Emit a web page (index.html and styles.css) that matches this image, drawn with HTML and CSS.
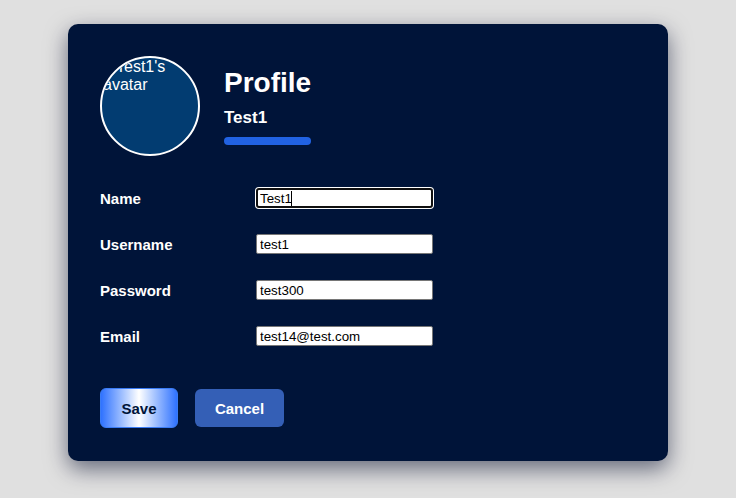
FILE: index.html
```html
<!DOCTYPE html>
<html lang="en">
<head>
<meta charset="utf-8">
<title>Profile</title>
<link rel="stylesheet" href="styles.css">
</head>
<body>
<div class="card">
  <div class="header">
    <div class="avatar"><span class="alt"><span class="broken"></span>Test1's avatar</span></div>
    <div class="titles">
      <h1 class="title">Profile</h1>
      <div class="subtitle">Test1</div>
      <div class="bar"></div>
    </div>
  </div>
  <div class="form">
    <label class="label">Name</label>
    <div class="field focused"><input class="input" type="text" value="Test1"><span class="caret"></span></div>
    <label class="label">Username</label>
    <div class="field"><input class="input" type="text" value="test1"></div>
    <label class="label">Password</label>
    <div class="field"><input class="input" type="text" value="test300"></div>
    <label class="label">Email</label>
    <div class="field"><input class="input" type="text" value="test14@test.com"></div>
  </div>
  <div class="actions">
    <button class="btn save">Save</button>
    <button class="btn cancel">Cancel</button>
  </div>
</div>
</body>
</html>
```
FILE: styles.css
```css
html, body {
  margin: 0;
  padding: 0;
}
body {
  background: #e0e0e0;
  font-family: "Liberation Sans", Arial, sans-serif;
  height: 498px;
  overflow: hidden;
}
.card {
  width: 600px;
  height: 437px;
  box-sizing: border-box;
  margin: 24px auto 0;
  background: #001439;
  border-radius: 10px;
  padding: 32px;
  box-shadow: 0 8px 22px rgba(0, 10, 40, 0.55);
}
.header {
  display: flex;
  align-items: center;
  gap: 24px;
}
.avatar {
  width: 100px;
  height: 100px;
  box-sizing: border-box;
  border: 2px solid #ffffff;
  border-radius: 50%;
  background: #023c71;
  overflow: hidden;
  color: #ffffff;
  font-size: 16px;
  line-height: 18px;
  padding: 0 0 0 1px;
  flex: none;
}
.alt {
  display: block;
  width: 80px;
}
.broken {
  display: inline-block;
  width: 12px;
  height: 12px;
  margin-right: 1px;
  vertical-align: -1px;
  background: linear-gradient(135deg, transparent 0 55%, #9aa7b3 55% 70%, transparent 70%);
}
.titles {
  display: flex;
  flex-direction: column;
  align-items: flex-start;
}
.title {
  margin: 0;
  color: #ffffff;
  font-size: 28px;
  line-height: 32px;
  font-weight: bold;
}
.subtitle {
  margin-top: 9px;
  color: #ffffff;
  font-size: 17px;
  line-height: 20px;
  font-weight: bold;
}
.bar {
  margin-top: 9px;
  width: 87px;
  height: 8px;
  border-radius: 4px;
  background: #2162e2;
}
.form {
  margin-top: 32px;
  display: grid;
  grid-template-columns: 156px 177px;
  grid-auto-rows: 20px;
  row-gap: 26px;
  align-items: center;
}
.label {
  color: #ffffff;
  font-size: 15px;
  font-weight: bold;
  line-height: 17px;
}
.field {
  position: relative;
  height: 20px;
}
.input {
  display: block;
  width: 177px;
  height: 20px;
  box-sizing: border-box;
  margin: 0;
  padding: 1px 3px;
  border: 1px solid #767676;
  border-radius: 2px;
  background: #ffffff;
  color: #000000;
  font-family: "Liberation Sans", Arial, sans-serif;
  font-size: 13.33px;
  outline: none;
}
.focused .input {
  border: 2px solid #101010;
  border-radius: 3px;
  padding: 0 2px;
  box-shadow: 0 0 0 1px #ffffff;
}
.caret {
  position: absolute;
  left: 35px;
  top: 3px;
  width: 1px;
  height: 15px;
  background: #000000;
}
.actions {
  margin-top: 42px;
  display: flex;
  align-items: center;
  gap: 17px;
}
.btn {
  font-family: "Liberation Sans", Arial, sans-serif;
  font-size: 15px;
  font-weight: bold;
  border-radius: 6px;
  cursor: pointer;
}
.save {
  width: 78px;
  height: 40px;
  border: 1px solid #3a7cf5;
  color: #001439;
  background: linear-gradient(90deg, #2f72ff 0%, #a9c6ff 30%, #ffffff 50%, #a9c6ff 70%, #2f72ff 100%);
}
.cancel {
  width: 89px;
  height: 38px;
  border: none;
  color: #ffffff;
  background: #345fb6;
}
```
